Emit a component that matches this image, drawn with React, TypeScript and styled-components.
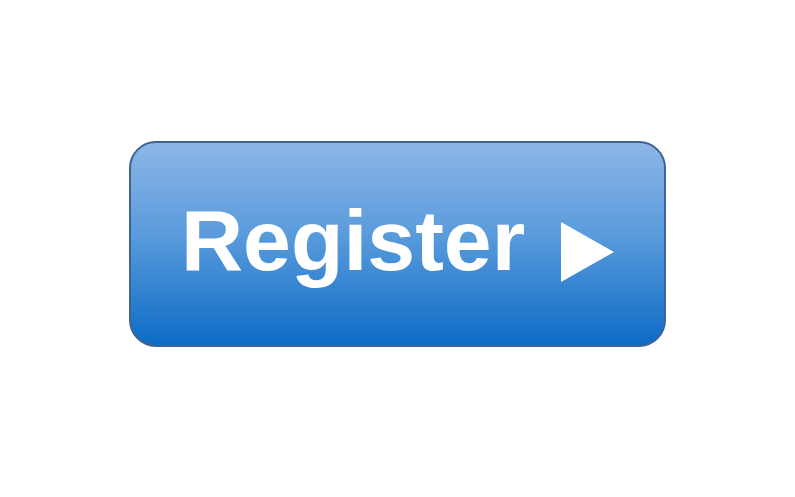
import styled, { createGlobalStyle } from "styled-components";

const GlobalStyle = createGlobalStyle`
  html, body {
    margin: 0;
    padding: 0;
    background: #ffffff;
  }
`;

const Page = styled.div`
  width: 795px;
  height: 497px;
  display: flex;
  justify-content: center;
  align-items: flex-start;
  padding-top: 141px;
  box-sizing: border-box;
`;

const Button = styled.button`
  width: 537px;
  height: 206px;
  box-sizing: border-box;
  border: 2px solid #3e6496;
  border-radius: 27px;
  background: linear-gradient(to bottom, #8db6e6 0%, #5a9bdc 45%, #0d6cc5 100%);
  display: flex;
  align-items: flex-start;
  padding: 54px 0 0 50px;
  gap: 36px;
  cursor: pointer;
`;

const Label = styled.span`
  font-family: "Liberation Sans", Arial, sans-serif;
  font-weight: bold;
  font-size: 86px;
  line-height: 1;
  color: #ffffff;
`;

const Arrow = styled.svg`
  width: 53px;
  height: 60px;
  margin-top: 25px;
`;

export default function App() {
  return (
    <>
      <GlobalStyle />
      <Page>
        <Button>
          <Label>Register</Label>
          <Arrow viewBox="0 0 53 60">
            <polygon points="0,0 53,30 0,60" fill="#ffffff" />
          </Arrow>
        </Button>
      </Page>
    </>
  );
}
